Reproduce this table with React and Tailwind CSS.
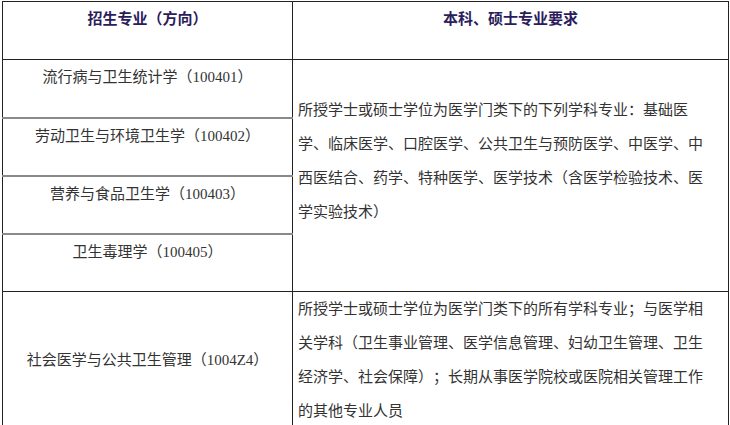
import React from "react";

const rows = [
    "流行病与卫生统计学（100401）",
    "劳动卫生与环境卫生学（100402）",
    "营养与食品卫生学（100403）",
    "卫生毒理学（100405）",
];

export default function App() {
    return (
        <div
            className="bg-white w-[730px] h-[425px] overflow-hidden pl-[2px] pt-[1px] text-[15px] leading-[34px] text-[#333] [text-spacing-trim:space-all]"
            style={{ fontFamily: '"Liberation Serif", "Noto Sans CJK SC", serif' }}
        >
            <table className="table-fixed border-collapse w-[726px]">
                <colgroup>
                    <col className="w-[290px]" />
                    <col className="w-[436px]" />
                </colgroup>
                <tbody>
                    {/* header */}
                    <tr>
                        <td className="h-[58px] align-top text-center p-0 border border-[#222] font-bold text-[#2b1d5c]">
                            招生专业（方向）
                        </td>
                        <td className="h-[58px] align-top text-center p-0 border border-[#222] font-bold text-[#2b1d5c]">
                            本科、硕士专业要求
                        </td>
                    </tr>

                    {rows.map((name, i) => (
                        <tr key={i}>
                            <td
                                className={`h-[58px] align-top text-center p-0 border border-[#222] ${
                                    i < rows.length - 1 ? "border-b-2 border-b-[#8a8a8a]" : ""
                                }`}
                            >
                                {name}
                            </td>
                            {i === 0 && (
                                <td
                                    rowSpan={4}
                                    className="align-top border border-[#222] pl-[5px] pr-[15px] pt-[33px]"
                                >
                                    所授学士或硕士学位为医学门类下的下列学科专业：基础医学、临床医学、口腔医学、公共卫生与预防医学、中医学、中西医结合、药学、特种医学、医学技术（含医学检验技术、医学实验技术）
                                </td>
                            )}
                        </tr>
                    ))}

                    <tr>
                        <td className="align-middle text-center p-0 border border-[#222]">
                            社会医学与公共卫生管理（1004Z4）
                        </td>
                        <td className="align-top border border-[#222] pl-[5px] pr-[15px] p-0">
                            所授学士或硕士学位为医学门类下的所有学科专业；与医学相关学科（卫生事业管理、医学信息管理、妇幼卫生管理、卫生经济学、社会保障）；长期从事医学院校或医院相关管理工作的其他专业人员
                        </td>
                    </tr>
                </tbody>
            </table>
        </div>
    );
}
